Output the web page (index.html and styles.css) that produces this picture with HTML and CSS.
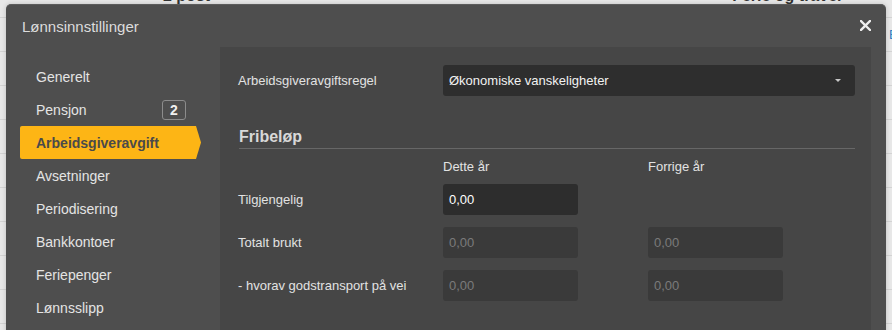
FILE: index.html
```html
<!DOCTYPE html>
<html lang="no">
<head>
<meta charset="utf-8">
<title>Lønnsinnstillinger</title>
<link rel="stylesheet" href="styles.css">
</head>
<body>
<div class="page">
  <div class="page-head">
    <span class="ph-left">2 post</span>
    <span class="ph-right">Ferie og travel</span>
  </div>
  <div class="page-row"><span class="page-link">Endre</span></div>
  <div class="page-row"></div>
  <div class="page-row"></div>
  <div class="page-row"></div>
  <div class="page-row"></div>
  <div class="page-row"></div>
  <div class="page-row"></div>
  <div class="page-row"></div>
  <div class="page-row"></div>
</div>

<div class="modal">
  <div class="modal-header">
    <span class="modal-title">Lønnsinnstillinger</span>
    <span class="modal-close" aria-label="Lukk">
      <svg width="11" height="11" viewBox="0 0 11 11"><path d="M1 1 L10 10 M10 1 L1 10" stroke="#eeeeee" stroke-width="2.4" stroke-linecap="square" fill="none"/></svg>
    </span>
  </div>
  <div class="modal-body">
    <nav class="sidebar">
      <div class="nav-item">Generelt</div>
      <div class="nav-item">Pensjon <span class="badge">2</span></div>
      <div class="nav-item active">Arbeidsgiveravgift</div>
      <div class="nav-item">Avsetninger</div>
      <div class="nav-item">Periodisering</div>
      <div class="nav-item">Bankkontoer</div>
      <div class="nav-item">Feriepenger</div>
      <div class="nav-item">Lønnsslipp</div>
    </nav>
    <section class="panel">
      <div class="select-row">
        <label class="field-label">Arbeidsgiveravgiftsregel</label>
        <div class="select">
          <span>Økonomiske vanskeligheter</span>
          <span class="caret"></span>
        </div>
      </div>
      <h3 class="section-title">Fribeløp</h3>
      <div class="grid">
        <div></div>
        <div class="col-head">Dette år</div>
        <div class="col-head">Forrige år</div>

        <div class="field-label">Tilgjengelig</div>
        <div class="input">0,00</div>
        <div></div>

        <div class="field-label">Totalt brukt</div>
        <div class="input disabled">0,00</div>
        <div class="input disabled">0,00</div>

        <div class="field-label">- hvorav godstransport på vei</div>
        <div class="input disabled">0,00</div>
        <div class="input disabled">0,00</div>
      </div>
    </section>
  </div>
</div>
</body>
</html>
```

FILE: styles.css
```css
html, body {
  margin: 0;
  padding: 0;
  height: 100%;
  overflow: hidden;
}

body {
  background: #e8e8e8;
  font-family: "Liberation Sans", Arial, sans-serif;
  position: relative;
}

.page-head {
  height: 17px;
  border-bottom: 1px solid #d4d4d4;
  display: flex;
  font-size: 16px;
  font-weight: bold;
  line-height: 20px;
  color: #333;
}

.ph-left {
  margin-top: -14px;
  margin-left: 163px;
}

.ph-right {
  margin-top: -14px;
  margin-left: 522px;
}

.page-row {
  height: 33px;
  border-bottom: 1px solid #d4d4d4;
  display: flex;
  align-items: center;
}

.page-link {
  margin-left: 889px;
  color: #2f7fc4;
  font-size: 13px;
  white-space: nowrap;
}

.modal {
  position: absolute;
  left: 6px;
  top: 4px;
  width: 880px;
  bottom: -30px;
  background: #4e4e4e;
  border-radius: 5px 5px 0 0;
  border-top: 1px solid #5c5c5c;
  box-sizing: border-box;
  box-shadow: 0 0 5px rgba(0, 0, 0, 0.18);
  display: flex;
  flex-direction: column;
}

.modal-header {
  height: 42px;
  display: flex;
  align-items: center;
  justify-content: space-between;
  padding: 0 15px 0 16px;
  flex: none;
}

.modal-title {
  font-size: 15px;
  color: #dcdcdc;
}

.modal-close {
  display: flex;
  width: 11px;
  height: 11px;
  margin-top: -1px;
}

.modal-body {
  flex: 1;
  display: flex;
  padding-right: 15px;
}

.sidebar {
  width: 214px;
  flex: none;
  padding-top: 13px;
  display: flex;
  flex-direction: column;
}

.nav-item {
  margin-left: 14px;
  width: 181px;
  height: 33px;
  box-sizing: border-box;
  padding: 0 15px 0 16px;
  display: flex;
  align-items: center;
  font-size: 14px;
  color: #e4e4e4;
}

.nav-item.active {
  background: #fdb515;
  color: #4a4a4a;
  font-weight: bold;
  border-radius: 2px 0 0 2px;
  clip-path: polygon(0 0, calc(100% - 5px) 0, 100% 50%, calc(100% - 5px) 100%, 0 100%);
}

.badge {
  margin-left: auto;
  width: 24px;
  height: 20px;
  box-sizing: border-box;
  border: 1px solid #8c8c8c;
  border-radius: 3px;
  display: flex;
  align-items: center;
  justify-content: center;
  font-weight: bold;
  font-size: 14px;
  color: #f0f0f0;
}

.panel {
  flex: 1;
  background: #464646;
  padding: 18px 16px 0 18px;
}

.field-label {
  font-size: 13px;
  color: #e2e2e2;
}

.select-row {
  display: flex;
  align-items: center;
  height: 31px;
}

.select-row .field-label {
  width: 205px;
  flex: none;
}

.select {
  flex: 1;
  height: 31px;
  background: #2e2e2e;
  border-radius: 3px;
  display: flex;
  align-items: center;
  justify-content: space-between;
  padding: 0 14px 0 6px;
  font-size: 13px;
  color: #f2f2f2;
}

.caret {
  width: 0;
  height: 0;
  border-left: 3px solid transparent;
  border-right: 3px solid transparent;
  border-top: 3px solid #c8c8c8;
  margin-top: -1px;
}

.section-title {
  margin: 31px 0 0 1px;
  padding-bottom: 1px;
  border-bottom: 1px solid #676767;
  font-size: 16px;
  line-height: 20px;
  font-weight: bold;
  color: #d8d8d8;
}

.grid {
  margin-top: 10px;
  display: grid;
  grid-template-columns: 205px 205px 135px;
  grid-template-rows: 13px 31px 31px 31px;
  row-gap: 12px;
  align-items: center;
}

.col-head {
  align-self: start;
  font-size: 13px;
  line-height: 16px;
  color: #e2e2e2;
}

.input {
  width: 135px;
  height: 31px;
  box-sizing: border-box;
  border-radius: 3px;
  background: #2d2d2d;
  display: flex;
  align-items: center;
  padding-left: 6px;
  font-size: 13px;
  color: #ffffff;
}

.input.disabled {
  background: #3a3a3a;
  color: #7b7b7b;
}
```
